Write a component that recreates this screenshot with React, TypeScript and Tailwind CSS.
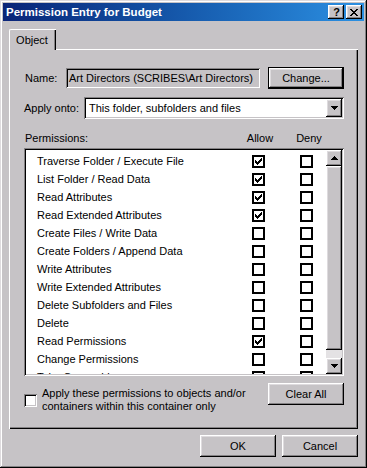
import React from 'react'

// Bordures 3D façon Windows classique
const raised =
  'shadow-[inset_-1px_-1px_#000,inset_1px_1px_#fff,inset_-2px_-2px_#848284,inset_2px_2px_#dedbde]'
const sunken =
  'shadow-[inset_1px_1px_#848284,inset_-1px_-1px_#fff,inset_2px_2px_#000,inset_-2px_-2px_#c6c3c6]'

const permissions: { label: string; allow: boolean }[] = [
  { label: 'Traverse Folder / Execute File', allow: true },
  { label: 'List Folder / Read Data', allow: true },
  { label: 'Read Attributes', allow: true },
  { label: 'Read Extended Attributes', allow: true },
  { label: 'Create Files / Write Data', allow: false },
  { label: 'Create Folders / Append Data', allow: false },
  { label: 'Write Attributes', allow: false },
  { label: 'Write Extended Attributes', allow: false },
  { label: 'Delete Subfolders and Files', allow: false },
  { label: 'Delete', allow: false },
  { label: 'Read Permissions', allow: true },
  { label: 'Change Permissions', allow: false },
  { label: 'Take Ownership', allow: false },
]

function ArrowDown() {
  return (
    <svg width="7" height="4" viewBox="0 0 7 4" shapeRendering="crispEdges">
      <path d="M0 0h7v1H0z M1 1h5v1H1z M2 2h3v1H2z M3 3h1v1H3z" fill="#000" />
    </svg>
  )
}

function ArrowUp() {
  return (
    <svg width="7" height="4" viewBox="0 0 7 4" shapeRendering="crispEdges">
      <path d="M3 0h1v1H3z M2 1h3v1H2z M1 2h5v1H1z M0 3h7v1H0z" fill="#000" />
    </svg>
  )
}

// Case à cocher "plate" de la liste
function FlatCheck({ checked }: { checked: boolean }) {
  return (
    <svg width="13" height="13" viewBox="0 0 13 13" shapeRendering="crispEdges" className="shrink-0">
      <rect x="1" y="1" width="11" height="11" fill="#fff" stroke="#000" strokeWidth="2" />
      {checked && (
        <path
          d="M9 3h1v1H9z M8 4h2v1H8z M3 5h1v1H3z M7 5h3v1H7z M3 6h2v1H3z M6 6h3v1H6z M3 7h5v1H3z M4 8h3v1H4z M5 9h1v1H5z"
          fill="#000"
        />
      )}
    </svg>
  )
}

function Button({ label, def = false }: { label: string; def?: boolean }) {
  if (def) {
    return (
      <div className="w-[76px] h-[22px] border border-black">
        <div className={`h-full flex items-center justify-center ${raised}`}>{label}</div>
      </div>
    )
  }
  return (
    <div className={`w-[76px] h-[22px] flex items-center justify-center ${raised}`}>{label}</div>
  )
}

export default function App() {
  return (
    <div className="w-[367px] h-[468px] bg-[#c6c3c6] p-[3px] shadow-[inset_-1px_-1px_#000,inset_1px_1px_#dedbde,inset_-2px_-2px_#848284,inset_2px_2px_#fff] font-['Liberation_Sans',Arial,sans-serif] text-[11px] leading-[13px] text-black select-none">
      {/* Barre de titre */}
      <div className="h-[18px] flex items-center bg-gradient-to-r from-[#0a2478] to-[#2c90e2] pl-[3px] pr-[2px]">
        <span className="text-white font-bold text-[11.5px] flex-1">Permission Entry for Budget</span>
        <div className={`w-[16px] h-[14px] flex items-center justify-center bg-[#c6c3c6] ${raised}`}>
          <span className="font-bold text-[11px] leading-none pl-[1px]">?</span>
        </div>
        <div className={`w-[16px] h-[14px] ml-[2px] flex items-center justify-center bg-[#c6c3c6] ${raised}`}>
          <svg width="8" height="7" viewBox="0 0 8 7" shapeRendering="crispEdges">
            <path
              d="M0 0h2v1H0z M6 0h2v1H6z M1 1h2v1H1z M5 1h2v1H5z M2 2h4v1H2z M3 3h2v1H3z M2 4h4v1H2z M1 5h2v1H1z M5 5h2v1H5z M0 6h2v1H0z M6 6h2v1H6z"
              fill="#000"
            />
          </svg>
        </div>
      </div>

      <div className="px-[6px] pt-[8px]">
        {/* Onglet */}
        <div className="h-[20px] flex">
          <div className="relative z-10 w-[47px] h-[21px] bg-[#c6c3c6] border-l border-t border-white rounded-tl-[2px] shadow-[inset_-1px_0_#000,inset_-2px_0_#848284] flex items-center justify-center pr-[2px]">
            Object
          </div>
        </div>

        {/* Panneau */}
        <div className="h-[380px] pt-[18px] pl-[15px] pr-[14px] shadow-[inset_1px_1px_#fff,inset_-1px_-1px_#000,inset_-2px_-2px_#848284]">
          <div className="h-[22px] flex items-center">
            <span className="w-[42px] pl-[1px]">Name:</span>
            <div className={`w-[194px] h-[20px] flex items-center pl-[3px] ${sunken}`}>
              Art Directors (SCRIBES\Art Directors)
            </div>
            <div className="ml-auto">
              <Button label="Change..." def />
            </div>
          </div>

          <div className="h-[22px] mt-[8px] flex items-center">
            <span className="w-[60px]">Apply onto:</span>
            <div className={`w-[260px] h-[22px] bg-white flex items-center p-[2px] ${sunken}`}>
              <span className="flex-1 pl-[3px]">This folder, subfolders and files</span>
              <div className={`w-[16px] h-full bg-[#c6c3c6] flex items-center justify-center ${raised}`}>
                <ArrowDown />
              </div>
            </div>
          </div>

          <div className="h-[29px] flex items-end pb-[3px]">
            <span className="w-[210px] pl-[1px]">Permissions:</span>
            <span className="w-[52px] text-center">Allow</span>
            <span className="w-[46px] text-center">Deny</span>
          </div>

          {/* Liste des permissions */}
          <div className={`w-[320px] h-[228px] bg-white p-[2px] flex ${sunken}`}>
            <div className="flex-1 overflow-hidden pt-[2px]">
              {permissions.map((p) => (
                <div key={p.label} className="h-[18px] flex items-center">
                  <span className="w-[226px] pl-[11px] whitespace-nowrap">{p.label}</span>
                  <FlatCheck checked={p.allow} />
                  <span className="w-[35px]" />
                  <FlatCheck checked={false} />
                </div>
              ))}
            </div>
            <div className="w-[16px] flex flex-col bg-[#e4e2e4]">
              <div className={`h-[16px] bg-[#c6c3c6] flex items-center justify-center ${raised}`}>
                <ArrowUp />
              </div>
              <div className={`h-[184px] bg-[#c6c3c6] ${raised}`} />
              <div className="flex-1" />
              <div className={`h-[16px] bg-[#c6c3c6] flex items-center justify-center ${raised}`}>
                <ArrowDown />
              </div>
            </div>
          </div>

          <div className="mt-[7px] flex items-start justify-between">
            <div className="mt-[4px] flex items-center gap-[5px]">
              <div className={`w-[13px] h-[13px] bg-white ${sunken}`} />
              <div>
                <div>Apply these permissions to objects and/or</div>
                <div>containers within this container only</div>
              </div>
            </div>
            <Button label="Clear All" />
          </div>
        </div>

        {/* Boutons du bas */}
        <div className="mt-[6px] flex justify-end gap-[6px]">
          <Button label="OK" />
          <Button label="Cancel" />
        </div>
      </div>
    </div>
  )
}
